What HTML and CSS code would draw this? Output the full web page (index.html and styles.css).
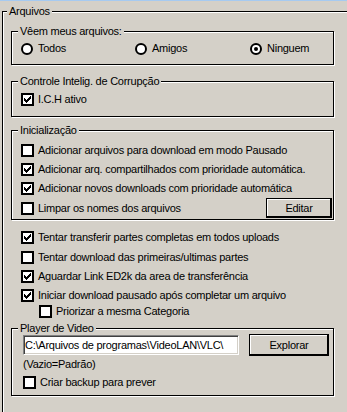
FILE: index.html
```html
<!DOCTYPE html>
<html lang="pt">
<head>
  <meta charset="UTF-8">
  <title>Arquivos</title>
  <link rel="stylesheet" href="styles.css">
</head>
<body>
  <div class="top-strip"></div>

  <div class="outer-group">
    <span class="outer-title">Arquivos</span>

    <!-- Quem ve os arquivos -->
    <div class="group group-visao">
      <span class="group-title">Vêem meus arquivos:</span>
      <div class="radio-row">
        <label class="opt"><span class="radio"></span>Todos</label>
        <label class="opt"><span class="radio"></span>Amigos</label>
        <label class="opt"><span class="radio checked"></span>Ninguem</label>
      </div>
    </div>

    <div class="group group-ich">
      <span class="group-title">Controle Intelig. de Corrupção</span>
      <div class="row">
        <span class="check checked"><svg viewBox="0 0 7 7" width="7" height="7" shape-rendering="crispEdges"><path d="M0 2h1v3h-1z M1 3h1v3h-1z M2 4h1v3h-1z M3 3h1v3h-1z M4 2h1v3h-1z M5 1h1v3h-1z M6 0h1v3h-1z"/></svg></span>
        <span class="label">I.C.H ativo</span>
      </div>
    </div>

    <div class="group group-init">
      <span class="group-title">Inicialização</span>
      <div class="row">
        <span class="check"></span>
        <span class="label">Adicionar arquivos para download em modo Pausado</span>
      </div>
      <div class="row">
        <span class="check checked"><svg viewBox="0 0 7 7" width="7" height="7" shape-rendering="crispEdges"><path d="M0 2h1v3h-1z M1 3h1v3h-1z M2 4h1v3h-1z M3 3h1v3h-1z M4 2h1v3h-1z M5 1h1v3h-1z M6 0h1v3h-1z"/></svg></span>
        <span class="label">Adicionar arq. compartilhados com prioridade automática.</span>
      </div>
      <div class="row">
        <span class="check checked"><svg viewBox="0 0 7 7" width="7" height="7" shape-rendering="crispEdges"><path d="M0 2h1v3h-1z M1 3h1v3h-1z M2 4h1v3h-1z M3 3h1v3h-1z M4 2h1v3h-1z M5 1h1v3h-1z M6 0h1v3h-1z"/></svg></span>
        <span class="label">Adicionar novos downloads com prioridade automática</span>
      </div>
      <div class="row row-button">
        <span class="check"></span>
        <span class="label">Limpar os nomes dos arquivos</span>
        <button class="btn btn-editar">Editar</button>
      </div>
    </div>

    <div class="loose">
      <div class="row">
        <span class="check checked"><svg viewBox="0 0 7 7" width="7" height="7" shape-rendering="crispEdges"><path d="M0 2h1v3h-1z M1 3h1v3h-1z M2 4h1v3h-1z M3 3h1v3h-1z M4 2h1v3h-1z M5 1h1v3h-1z M6 0h1v3h-1z"/></svg></span>
        <span class="label">Tentar transferir partes completas em todos uploads</span>
      </div>
      <div class="row row-tall">
        <span class="check"></span>
        <span class="label">Tentar download das primeiras/ultimas partes</span>
      </div>
      <div class="row">
        <span class="check checked"><svg viewBox="0 0 7 7" width="7" height="7" shape-rendering="crispEdges"><path d="M0 2h1v3h-1z M1 3h1v3h-1z M2 4h1v3h-1z M3 3h1v3h-1z M4 2h1v3h-1z M5 1h1v3h-1z M6 0h1v3h-1z"/></svg></span>
        <span class="label">Aguardar Link ED2k da area de transferência</span>
      </div>
      <div class="row">
        <span class="check checked"><svg viewBox="0 0 7 7" width="7" height="7" shape-rendering="crispEdges"><path d="M0 2h1v3h-1z M1 3h1v3h-1z M2 4h1v3h-1z M3 3h1v3h-1z M4 2h1v3h-1z M5 1h1v3h-1z M6 0h1v3h-1z"/></svg></span>
        <span class="label">Iniciar download pausado após completar um arquivo</span>
      </div>
      <div class="row row-sub">
        <span class="check"></span>
        <span class="label">Priorizar a mesma Categoria</span>
      </div>
    </div>

    <div class="group group-player">
      <span class="group-title">Player de Video</span>
      <div class="path-row">
        <input class="path-input" type="text" value="C:\Arquivos de programas\VideoLAN\VLC\">
        <button class="btn btn-explorar">Explorar</button>
      </div>
      <div class="hint">(Vazio=Padrão)</div>
      <div class="row">
        <span class="check"></span>
        <span class="label">Criar backup para prever</span>
      </div>
    </div>
  </div>
</body>
</html>
```

FILE: styles.css
```css
body {
  margin: 0;
  background-color: #d4d0c8;
  font-family: "Liberation Sans", Arial, sans-serif;
  font-size: 11px;
  line-height: 13px;
  letter-spacing: -0.25px;
  color: #000;
  overflow: hidden;
}

.top-strip {
  height: 1px;
  background-color: #a6caf0;
}

/* Group boxes: black line with a white line 1px further in */
.outer-group {
  position: relative;
  margin: 10px 0 0 2px;
  width: 336px;
  height: 400px;
  padding: 0 0 0 8px;
  border-left: 1px solid #000;
  border-top: 1px solid #000;
  box-shadow: inset 1px 1px 0 #fff;
}

.outer-title {
  position: absolute;
  top: -7px;
  left: 4px;
  padding: 0 2px;
  background-color: #d4d0c8;
}

.group {
  position: relative;
  width: 323px;
  box-sizing: border-box;
  border: 1px solid #000;
  box-shadow: 1px 1px 0 #fff, inset 1px 1px 0 #fff;
  padding-left: 9px;
}

.group-title {
  position: absolute;
  top: -7px;
  left: 6px;
  padding: 0 2px;
  background-color: #d4d0c8;
  white-space: nowrap;
}

.group-visao {
  margin-top: 19px;
  padding-top: 7px;
  padding-bottom: 6px;
}

.group-ich {
  margin-top: 16px;
  padding-top: 8px;
  padding-bottom: 7px;
}

.group-init {
  margin-top: 13px;
  padding-top: 10px;
  padding-bottom: 1px;
  padding-right: 1px;
}

.group-player {
  margin-top: 10px;
  padding-top: 5px;
  padding-bottom: 3px;
  padding-left: 11px;
}

/* Rows */
.row {
  display: flex;
  align-items: center;
  height: 19px;
  white-space: nowrap;
}

.row-button {
  height: 20px;
}

.row-button .label {
  flex: 1;
}

.label {
  margin-left: 4px;
}

.radio-row {
  display: grid;
  grid-template-columns: 114px 115px auto;
  height: 19px;
  align-items: center;
}

.opt {
  display: flex;
  align-items: center;
}

.opt .radio {
  margin-right: 5px;
}

/* Checkboxes and radios */
.check {
  display: flex;
  align-items: center;
  justify-content: center;
  width: 13px;
  height: 13px;
  box-sizing: border-box;
  border: 2px solid #000;
  background-color: #fff;
  flex-shrink: 0;
}

.check svg {
  display: block;
}

.radio {
  position: relative;
  width: 12px;
  height: 12px;
  box-sizing: border-box;
  border: 2px solid #000;
  border-radius: 50%;
  background-color: #fff;
  flex-shrink: 0;
}

.radio.checked::after {
  content: "";
  position: absolute;
  left: 2px;
  top: 2px;
  width: 4px;
  height: 4px;
  border-radius: 50%;
  background-color: #000;
}

/* Loose options under Inicializacao */
.loose {
  margin-top: 8px;
  padding-left: 10px;
}

.row-tall {
  height: 20px;
}

.row-sub {
  height: 13px;
  padding-left: 18px;
}

/* Buttons */
.btn {
  font: inherit;
  letter-spacing: inherit;
  color: #000;
  background-color: #d4d0c8;
  border: 1px solid #000;
  box-shadow: inset -1px -1px 0 #000, inset 1px 1px 0 #fff;
  padding: 0;
  margin: 0;
}

.btn-editar {
  width: 66px;
  height: 20px;
}

.btn-explorar {
  width: 80px;
  height: 22px;
  margin-left: 10px;
}

/* Player path */
.path-row {
  display: flex;
  align-items: flex-start;
}

.path-input {
  width: 216px;
  height: 20px;
  box-sizing: border-box;
  margin: 1px 0 0 0;
  padding: 0 1px;
  font: inherit;
  letter-spacing: inherit;
  color: #000;
  background-color: #fff;
  border: 1px solid;
  border-color: #808080 #fff #fff #808080;
  box-shadow: inset 1px 1px 0 #404040, inset -1px -1px 0 #d4d0c8;
  outline: none;
}

.hint {
  height: 14px;
  margin-top: 1px;
  line-height: 14px;
}

.group-player .row {
  margin-top: 2px;
}
```
